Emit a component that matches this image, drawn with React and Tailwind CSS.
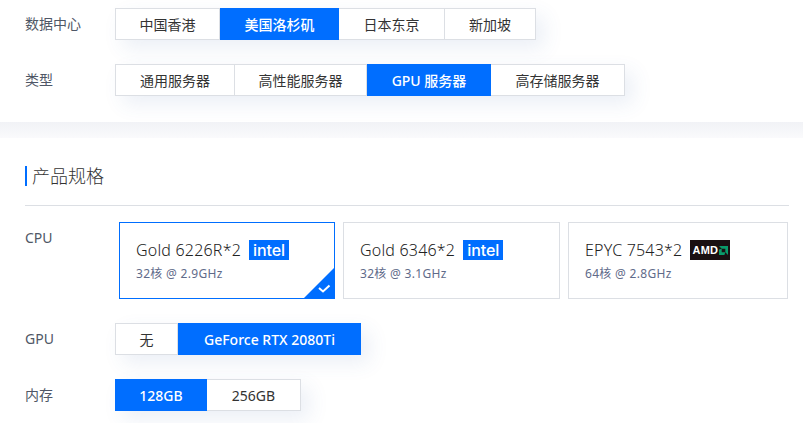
import React from 'react';

const font = 'font-["Noto_Sans","Noto_Sans_CJK_SC",sans-serif]';

const Segment = ({ items }) => (
  <div className="flex h-8 shadow-[8px_8px_20px_rgba(55,99,170,0.1)]">
    {items.map((item, i) => (
      <div
        key={item.label}
        style={{ width: item.width }}
        className={
          item.active
            ? 'flex items-center justify-center bg-[#006eff] text-[14px] font-medium text-white'
            : `flex items-center justify-center border-y border-r border-[#dcdfe4] bg-white text-[14px] text-[#333] ${i === 0 ? 'border-l' : ''}`
        }
      >
        {item.label}
      </div>
    ))}
  </div>
);

const Row = ({ label, className, children }) => (
  <div className={`flex ${className}`}>
    <div className="w-[90px] shrink-0 pt-[6px] text-[14px] leading-5 text-[#4f5766]">{label}</div>
    {children}
  </div>
);

const IntelLogo = () => (
  <span className="ml-2 flex h-5 w-10 items-center justify-center bg-[#006eff] pb-[1px] font-['Inter',sans-serif] text-[16px] leading-none font-medium tracking-[-0.1px] text-white">
    intel
  </span>
);

const AmdLogo = () => (
  <span className="ml-2 flex h-5 w-10 items-center justify-center gap-[1px] bg-[#1a1012]">
    <span className="font-['Liberation_Sans',sans-serif] text-[11px] leading-none font-bold text-white">AMD</span>
    <svg viewBox="0 0 10 10" className="h-[9px] w-[9px]">
      <path d="M0 0h10v10l-3-3V3H3z" fill="#0a9a6a" />
      <path d="M0 10V4l3-1v4h4l-1 3z" fill="#0a9a6a" />
    </svg>
  </span>
);

const CpuCard = ({ name, sub, logo, active, width }) => (
  <div
    style={{ width }}
    className={`relative h-[77px] overflow-hidden border px-4 pt-[17px] ${active ? 'border-[#006eff]' : 'border-[#dcdfe4]'}`}
  >
    <div className="flex h-5 items-center text-[16px] font-light tracking-[0.2px] text-[#222]">
      {name}
      {logo}
    </div>
    <div className="mt-1 text-[12px] leading-5 tracking-[0.3px] text-[#5f6b8a]">{sub}</div>
    {active && (
      <svg viewBox="0 0 30 30" className="absolute right-0 bottom-0 h-[30px] w-[30px]">
        <path d="M30 0V30H0z" fill="#006eff" />
        <path d="M15 20l4 3.5 6.5-6" fill="none" stroke="#fff" strokeWidth="2" />
      </svg>
    )}
  </div>
);

export default function App() {
  return (
    <div className={`h-[423px] w-[803px] overflow-hidden bg-white ${font}`}>
      <section className="h-[122px] pt-2 pl-[25px]">
        <Row label="数据中心">
          <Segment
            items={[
              { label: '中国香港', width: 105 },
              { label: '美国洛杉矶', width: 119, active: true },
              { label: '日本东京', width: 106 },
              { label: '新加坡', width: 91 },
            ]}
          />
        </Row>
        <Row label="类型" className="mt-6">
          <Segment
            items={[
              { label: '通用服务器', width: 120 },
              { label: '高性能服务器', width: 132 },
              { label: 'GPU 服务器', width: 124, active: true },
              { label: '高存储服务器', width: 134 },
            ]}
          />
        </Row>
      </section>

      <div className="h-4 bg-gradient-to-b from-[#f1f2f6] to-[#fafafc]" />

      <section className="px-[25px] pt-[28px]">
        <div className="mr-[-11px] border-b border-[#dcdfe4] pb-[19px]">
          <h2 className="border-l-2 border-[#006eff] pl-[5px] text-[18px] leading-5 font-light text-[#333]">产品规格</h2>
        </div>

        <Row label="CPU" className="mt-4">
          <div className="ml-1 flex gap-2">
            <CpuCard name="Gold 6226R*2" sub="32核 @ 2.9GHz" logo={<IntelLogo />} width={216} active />
            <CpuCard name="Gold 6346*2" sub="32核 @ 3.1GHz" logo={<IntelLogo />} width={217} />
            <CpuCard name="EPYC 7543*2" sub="64核 @ 2.8GHz" logo={<AmdLogo />} width={220} />
          </div>
        </Row>

        <Row label="GPU" className="mt-6">
          <Segment
            items={[
              { label: '无', width: 63 },
              { label: 'GeForce RTX 2080Ti', width: 183, active: true },
            ]}
          />
        </Row>

        <Row label="内存" className="mt-6">
          <Segment
            items={[
              { label: '128GB', width: 92, active: true },
              { label: '256GB', width: 94 },
            ]}
          />
        </Row>
      </section>
    </div>
  );
}
